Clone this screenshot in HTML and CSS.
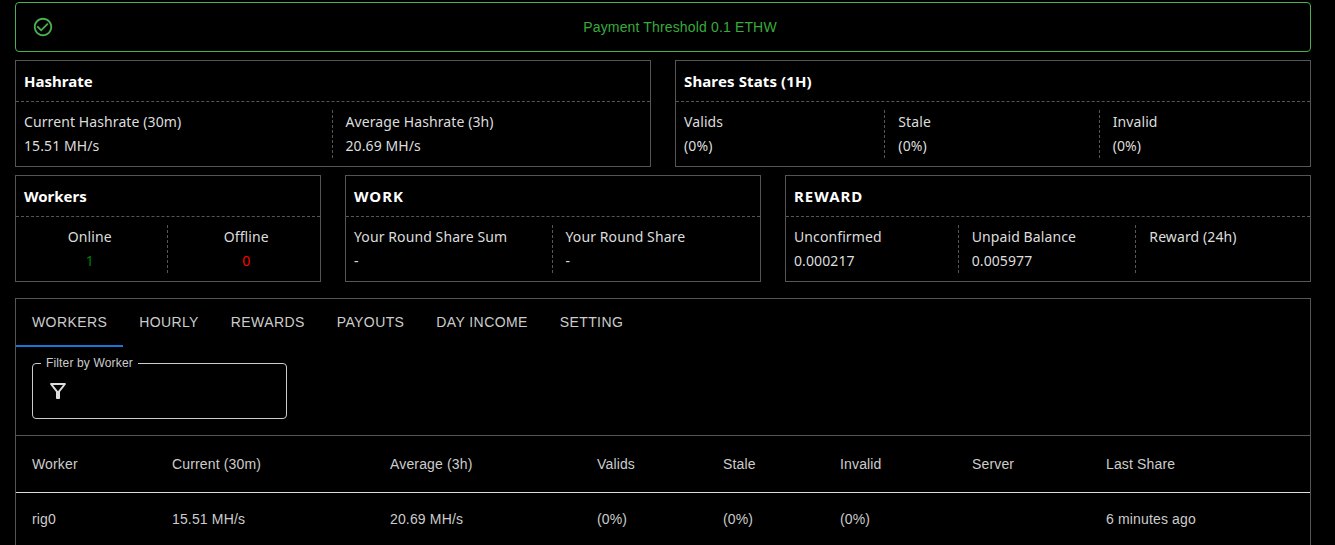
FILE: index.html
```html
<!DOCTYPE html>
<html lang="en">
<head>
    <meta charset="UTF-8">
    <title>Miner stats</title>
    <link rel="stylesheet" href="styles.css">
</head>
<body>
    <div class="alert">
        <svg class="alert-icon" viewBox="0 0 24 24"><path d="M16.59 7.58 10 14.17l-3.59-3.58L5 12l5 5 8-8zM12 2C6.48 2 2 6.48 2 12s4.48 10 10 10 10-4.48 10-10S17.52 2 12 2zm0 18c-4.42 0-8-3.58-8-8s3.58-8 8-8 8 3.58 8 8-3.58 8-8 8z"/></svg>
        <div class="alert-text">Payment Threshold 0.1 ETHW</div>
    </div>

    <div class="stats">
        <div class="card span6">
            <div class="card-head">Hashrate</div>
            <div class="card-body">
                <div class="cell"><div>Current Hashrate (30m)</div><div>15.51 MH/s</div></div>
                <div class="cell"><div>Average Hashrate (3h)</div><div>20.69 MH/s</div></div>
            </div>
        </div>
        <div class="card span6">
            <div class="card-head wide">Shares Stats (1H)</div>
            <div class="card-body">
                <div class="cell"><div>Valids</div><div>(0%)</div></div>
                <div class="cell"><div>Stale</div><div>(0%)</div></div>
                <div class="cell"><div>Invalid</div><div>(0%)</div></div>
            </div>
        </div>
        <div class="card span3">
            <div class="card-head">Workers</div>
            <div class="card-body center">
                <div class="cell"><div>Online</div><div class="green">1</div></div>
                <div class="cell"><div>Offline</div><div class="red">0</div></div>
            </div>
        </div>
        <div class="card span4">
            <div class="card-head caps">WORK</div>
            <div class="card-body">
                <div class="cell"><div>Your Round Share Sum</div><div>-</div></div>
                <div class="cell"><div>Your Round Share</div><div>-</div></div>
            </div>
        </div>
        <div class="card span5">
            <div class="card-head caps">REWARD</div>
            <div class="card-body">
                <div class="cell"><div>Unconfirmed</div><div>0.000217</div></div>
                <div class="cell"><div>Unpaid Balance</div><div>0.005977</div></div>
                <div class="cell"><div>Reward (24h)</div><div>&nbsp;</div></div>
            </div>
        </div>
    </div>

    <div class="panel">
        <div class="tabs">
            <a class="tab on" href="#">WORKERS</a>
            <a class="tab" href="#">HOURLY</a>
            <a class="tab" href="#">REWARDS</a>
            <a class="tab" href="#">PAYOUTS</a>
            <a class="tab" href="#">DAY INCOME</a>
            <a class="tab" href="#">SETTING</a>
        </div>
        <div class="filter">
            <div class="field">
                <span class="field-label">Filter by Worker</span>
                <svg class="field-icon" viewBox="0 0 24 24"><path d="M7 6h10l-5.01 6.3L7 6zm-2.75-.39C6.27 8.2 10 13 10 13v6c0 .55.45 1 1 1h2c.55 0 1-.45 1-1v-6s3.72-4.8 5.74-7.39c.51-.66.04-1.61-.79-1.61H5.04c-.83 0-1.3.95-.79 1.61z"/></svg>
            </div>
        </div>
        <table class="workers">
            <colgroup>
                <col class="c1"><col class="c2"><col class="c3"><col class="c4"><col class="c5"><col class="c6"><col class="c7"><col class="c8">
            </colgroup>
            <thead>
                <tr><th>Worker</th><th>Current (30m)</th><th>Average (3h)</th><th>Valids</th><th>Stale</th><th>Invalid</th><th>Server</th><th>Last Share</th></tr>
            </thead>
            <tbody>
                <tr><td>rig0</td><td>15.51 MH/s</td><td>20.69 MH/s</td><td>(0%)</td><td>(0%)</td><td>(0%)</td><td></td><td>6 minutes ago</td></tr>
            </tbody>
        </table>
    </div>
</body>
</html>
```

FILE: styles.css
```css
* {
    box-sizing: border-box;
}
html, body {
    height: 100%;
    overflow: hidden;
}
body {
    margin: 0;
    padding: 2px 24px 0 15px;
    background: #000;
    color: #ddd;
    font-family: "Liberation Sans", Arial, sans-serif;
    font-size: 14px;
}

/* alert */
.alert {
    display: flex;
    align-items: center;
    height: 50px;
    padding-left: 16px;
    border: 1px solid #4caf50;
    border-radius: 4px;
}
.alert-icon {
    width: 22px;
    height: 22px;
    fill: #4caf50;
    flex: none;
}
.alert-text {
    flex: 1;
    text-align: center;
    color: #38aa3c;
    padding-right: 4px;
    letter-spacing: .15px;
}

/* stat cards */
.stats {
    display: grid;
    grid-template-columns: repeat(12, 1fr);
    column-gap: 24px;
    row-gap: 8px;
    margin-top: 8px;
}
.span3 { grid-column: span 3; }
.span4 { grid-column: span 4; }
.span5 { grid-column: span 5; }
.span6 { grid-column: span 6; }
.card {
    border: 1px solid #555;
    font-family: "Noto Sans", sans-serif;
}
.card-head {
    height: 41px;
    padding: 0 8px;
    line-height: 40px;
    font-size: 15px;
    font-weight: 700;
    color: #fff;
    border-bottom: 1px dashed #555;
}
.card-head.wide {
    letter-spacing: .12px;
}
.card-head.caps {
    letter-spacing: 1px;
}
.card-body {
    display: flex;
    padding: 8px;
}
.cell {
    box-sizing: content-box;
    flex: 1 1 0;
    min-width: 0;
    padding: 0 11px 0 13px;
    line-height: 24px;
    letter-spacing: .1px;
    border-right: 1px dashed #555;
    white-space: nowrap;
}
.cell:first-child {
    padding-left: 0;
}
.cell:last-child {
    padding-right: 0;
    border-right: 0;
}
.center {
    text-align: center;
}
.green {
    color: #008000;
}
.red {
    color: #f00;
}

/* tabs panel */
.panel {
    margin-top: 16px;
    border: 1px solid #555;
}
.tabs {
    display: flex;
    height: 48px;
}
.tab {
    padding: 0 16px;
    line-height: 46px;
    height: 48px;
    color: #ccc;
    text-decoration: none;
    letter-spacing: .4px;
}
.tab.on {
    border-bottom: 2px solid #1976d2;
}
.filter {
    padding: 16px;
}
.field {
    position: relative;
    display: flex;
    align-items: center;
    width: 255px;
    height: 56px;
    padding-left: 13px;
    border: 1px solid #ccc;
    border-radius: 4px;
}
.field-label {
    position: absolute;
    top: -8px;
    left: 8px;
    padding: 0 5px;
    background: #000;
    color: #ccc;
    font-size: 12px;
    line-height: 14px;
    letter-spacing: .15px;
}
.field-icon {
    width: 24px;
    height: 24px;
    fill: #ddd;
}

/* table */
.workers {
    width: 100%;
    table-layout: fixed;
    border-collapse: collapse;
    color: #ccc;
    letter-spacing: .15px;
}
.workers th {
    height: 57px;
    padding: 0 16px;
    font-weight: 400;
    text-align: left;
    border-top: 1px solid #555;
    border-bottom: 1px solid #ddd;
}
.workers td {
    height: 53px;
    padding: 0 16px;
    border-bottom: 1px solid #555;
}
.c1 { width: 140px; }
.c2 { width: 218px; }
.c3 { width: 207px; }
.c4 { width: 126px; }
.c5 { width: 117px; }
.c6 { width: 132px; }
.c7 { width: 134px; }
```
